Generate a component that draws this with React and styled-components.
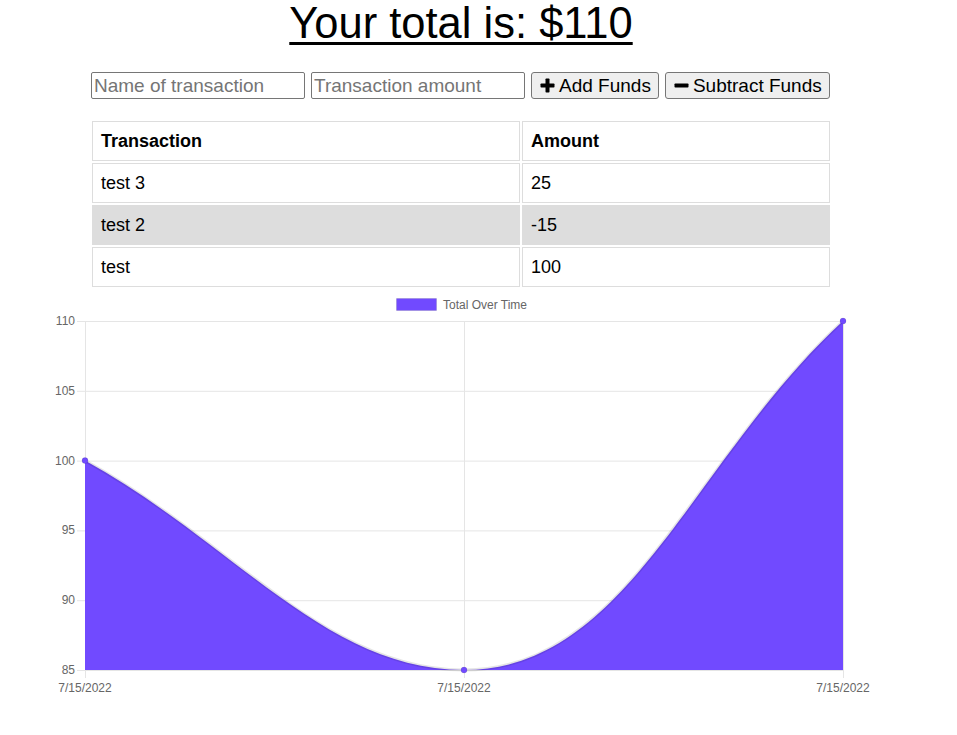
import React from "react";
import styled, { createGlobalStyle } from "styled-components";

const Global = createGlobalStyle`
  html, body { margin: 0; padding: 0; background: #fff; }
  body { font-family: "Liberation Sans", Arial, Helvetica, sans-serif; color: #000; }
`;

const Page = styled.div`
  width: 922px;
  display: flex;
  flex-direction: column;
  align-items: center;
`;

const Title = styled.h1`
  margin: 0;
  height: 64px;
  font-size: 43.5px;
  line-height: 47px;
  font-weight: 400;
  text-decoration: underline;
  text-decoration-thickness: 3px;
  text-underline-offset: 4px;
`;

const Form = styled.div`
  display: flex;
  gap: 6px;
  margin-top: 8px;
  width: 740px;
`;

const Input = styled.input`
  box-sizing: border-box;
  width: 214px;
  height: 27px;
  border: 1px solid #767676;
  border-radius: 2px;
  padding: 0 2px;
  font-family: "Liberation Sans", Arial, sans-serif;
  font-size: 19px;
  &::placeholder { color: #757575; }
`;

const Button = styled.button`
  box-sizing: border-box;
  height: 27px;
  display: flex;
  align-items: center;
  gap: 4px;
  padding: 0 7px 0 8px;
  background: #efefef;
  border: 1px solid #767676;
  border-radius: 3px;
  font-family: "Liberation Sans", Arial, sans-serif;
  font-size: 19px;
  color: #000;
`;

const Table = styled.table`
  margin-top: 20px;
  width: 742px;
  border-collapse: separate;
  border-spacing: 2px;
`;

const Cell = styled.td`
  box-sizing: border-box;
  height: 40px;
  border: 1px solid #dddddd;
  padding: 0 8px;
  font-size: 18px;
  text-align: left;
  background: ${(p) => (p.$shade ? "#dddddd" : "#fff")};
  font-weight: ${(p) => (p.$head ? 700 : 400)};
  width: ${(p) => p.$w || "auto"};
`;

const ChartWrap = styled.div`
  align-self: flex-start;
  margin-top: 1px;
`;

const PlusIcon = () => (
  <svg width="15" height="15" viewBox="0 0 15 15">
    <rect x="5.5" y="0.5" width="4" height="14" rx="0.8" fill="#000" />
    <rect x="0.5" y="5.5" width="14" height="4" rx="0.8" fill="#000" />
  </svg>
);
const MinusIcon = () => (
  <svg width="15" height="15" viewBox="0 0 15 15">
    <rect x="0.5" y="5.5" width="14" height="4" rx="0.8" fill="#000" />
  </svg>
);

const rows = [
  { name: "test 3", amt: "25" },
  { name: "test 2", amt: "-15" },
  { name: "test", amt: "100" },
];

const OY = 290;
const top = 321 - OY;
const bottom = 670 - OY;
const yFor = (v) => bottom - ((v - 85) / 25) * (bottom - top);
const xs = [85, 464, 843];
const purple = "#714aff";
const font = "Liberation Sans, Arial, sans-serif";

const Chart = () => {
  const p0 = [85, yFor(100)];
  const p1 = [464, yFor(85)];
  const p2 = [843, yFor(110)];
  const curve = `M${p0[0]},${p0[1]} C236.6,${p0[1] + 83.8} 325.5,${bottom} ${p1[0]},${p1[1]} C628.7,${bottom} 691.4,${p0[1]} ${p2[0]},${p2[1]}`;
  const area = `${curve} L843,${bottom} L85,${bottom} Z`;
  const ticks = [110, 105, 100, 95, 90, 85];
  return (
    <svg width="900" height="420" viewBox="0 0 900 420" style={{ display: "block" }}>
      {ticks.map((t) => (
        <g key={t}>
          <line x1="77" x2="843" y1={yFor(t) + 0.5} y2={yFor(t) + 0.5} stroke="#e5e5e5" strokeWidth="1" />
          <text x="75" y={yFor(t) + 4} textAnchor="end" fontSize="12" fill="#666" fontFamily={font}>{t}</text>
        </g>
      ))}
      {xs.map((x) => (
        <g key={x}>
          <line x1={x + 0.5} x2={x + 0.5} y1={top} y2={bottom + 8} stroke="#e5e5e5" strokeWidth="1" />
          <text x={x} y={bottom + 22} textAnchor="middle" fontSize="12" fill="#666" fontFamily={font}>7/15/2022</text>
        </g>
      ))}
      <path d={area} fill={purple} />
      <path d={curve} fill="none" stroke="rgba(0,0,0,0.1)" strokeWidth="3" />
      {[p0, p1, p2].map((p, i) => (
        <circle key={i} cx={p[0]} cy={p[1]} r="3" fill={purple} stroke="rgba(0,0,0,0.1)" strokeWidth="1" />
      ))}
      <rect x="396.5" y={298.5 - OY} width="40" height="12" fill={purple} stroke="rgba(0,0,0,0.1)" strokeWidth="1" />
      <text x="443" y={309 - OY} fontSize="12" fill="#666" fontFamily={font}>Total Over Time</text>
    </svg>
  );
};

export default function App() {
  return (
    <>
      <Global />
      <Page>
        <Title>Your total is: $110</Title>
        <Form>
          <Input placeholder="Name of transaction" />
          <Input placeholder="Transaction amount" />
          <Button><PlusIcon />Add Funds</Button>
          <Button><MinusIcon />Subtract Funds</Button>
        </Form>
        <Table>
          <thead>
            <tr>
              <Cell as="th" $head $w="428px">Transaction</Cell>
              <Cell as="th" $head>Amount</Cell>
            </tr>
          </thead>
          <tbody>
            {rows.map((r, i) => (
              <tr key={r.name}>
                <Cell $shade={i === 1}>{r.name}</Cell>
                <Cell $shade={i === 1}>{r.amt}</Cell>
              </tr>
            ))}
          </tbody>
        </Table>
        <ChartWrap>
          <Chart />
        </ChartWrap>
      </Page>
    </>
  );
}
